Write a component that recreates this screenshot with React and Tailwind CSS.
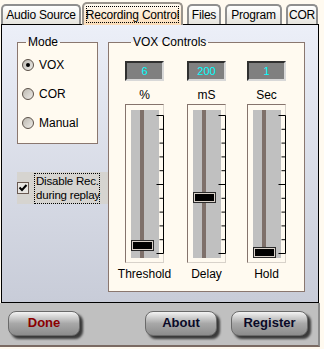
import React from "react";

const FONT = { fontFamily: '"Liberation Sans", Tahoma, Arial, sans-serif' };

function Tab({ label, selected, w }) {
  if (selected) {
    return (
      <div
        className={`relative h-[23px] ${w} -mb-[1px] rounded-t-[5px] border-2 border-b-0 border-[#9a948c] bg-gradient-to-b from-[#fffaf0] to-[#fbdcb8] px-[2px] pt-[2px] z-10`}
      >
        <div className="flex h-[17px] items-center justify-center whitespace-nowrap border border-dotted border-black text-[12px] tracking-[-0.2px] text-black">
          {label}
        </div>
      </div>
    );
  }
  return (
    <div
      className={`flex h-[20px] ${w} items-center justify-center whitespace-nowrap rounded-t-[5px] border-2 border-b-0 border-[#8f8f8f] bg-gradient-to-b from-[#ffffff] to-[#e6e4de] text-[12px] tracking-[-0.2px] text-black`}
    >
      {label}
    </div>
  );
}

function Radio({ label, checked }) {
  return (
    <div className="flex items-center gap-[5px] h-[14px]">
      <div className="flex h-[12px] w-[12px] items-center justify-center rounded-full border border-[#5a5048] bg-gradient-to-br from-[#bcb8b0] to-[#eeece8]">
        {checked && <div className="h-[4px] w-[4px] rounded-full bg-black" />}
      </div>
      <span className="text-[12px] text-black">{label}</span>
    </div>
  );
}

function ValueBox({ v }) {
  return (
    <div className="flex h-[20px] w-[39px] items-center justify-center border-2 border-t-[#303030] border-l-[#303030] border-b-[#d8d8d8] border-r-[#d8d8d8] bg-[#808080] text-[11px] text-[#00ffff]">
      {v}
    </div>
  );
}

function Slider({ pos }) {
  const ticks = [];
  for (let i = 0; i <= 10; i++) {
    const y = 5.5 + i * 13.8;
    const long = i === 0 || i === 5 || i === 10;
    ticks.push(
      <line key={i} x1={long ? 30 : 33} x2={37} y1={y} y2={y} stroke="black" strokeWidth="1" />
    );
  }
  return (
    <div className="relative h-[159px] w-[39px] border border-t-[#85736c] border-l-[#85736c] border-b-[#d8d2ca] border-r-[#d8d2ca] bg-[#fffaf0] pl-[5px] pt-[5px]">
      <div className="relative flex h-[148px] w-[28px] justify-start bg-[#c0c0c0]">
        <div className="ml-[9px] h-full w-[4px] bg-[#7e706a]" />
        <div
          className="absolute left-0 h-[11px] w-[23px] border border-[#2a2a2a] bg-black shadow-[inset_0_0_0_1px_#d8d0c8]"
          style={{ top: pos }}
        />
      </div>
      <svg className="absolute left-0 top-0" width="39" height="159">
        <line x1="37.5" x2="37.5" y1="10.5" y2="148.5" stroke="black" strokeWidth="1" />
        <g transform="translate(0.5,5)">{ticks}</g>
      </svg>
    </div>
  );
}

function GlossButton({ label, w, red }) {
  return (
    <div className={`relative h-[28px] ${w}`}>
      <div className="absolute left-[3px] top-[3px] h-[25px] w-[calc(100%-3px)] rounded-[8px] bg-[#3a3a3a] blur-[1px]" />
      <div
        className={`relative flex h-[25px] w-[calc(100%-3px)] items-center justify-center rounded-[8px] border border-[#6a6a6a] bg-gradient-to-b from-[#f4f4f4] via-[#a8a8a8] to-[#8c8c8c] text-[13px] font-bold ${
          red ? "text-[#8b0000]" : "text-[#0a0a28]"
        }`}
      >
        <span className="relative">{label}</span>
      </div>
    </div>
  );
}

export default function App() {
  return (
    <div className="h-[349px] w-[324px] overflow-hidden bg-[#fffaf0]" style={FONT}>
      {/* tabs */}
      <div className="flex h-[24px] items-end pl-[1px]">
        <Tab label="Audio Source" w="w-[80px]" />
        <div className="w-[1px]" />
        <Tab label="Recording Control" w="w-[101px]" selected />
        <div className="w-[4px]" />
        <Tab label="Files" w="w-[34px]" />
        <div className="w-[4px]" />
        <Tab label="Program" w="w-[57px]" />
        <div className="w-[4px]" />
        <Tab label="COR" w="w-[32px]" />
      </div>

      {/* panel */}
      <div className="ml-[1px] flex h-[279px] w-[318px] border border-black bg-gradient-to-b from-[#eceff8] to-[#c8ccd8] pl-[15px] pt-[11px]">
        {/* left column */}
        <div className="flex w-[91px] flex-col">
          <fieldset className="h-[108px] w-[81px] border border-[#8a776f] bg-[#fffaf0] pl-[4px] pt-[2px]">
            <legend className="ml-[4px] px-[2px] text-[12px] leading-[13px] text-black">Mode</legend>
            <div className="flex flex-col gap-[15px] pt-[7px]">
              <Radio label="VOX" checked />
              <Radio label="COR" />
              <Radio label="Manual" />
            </div>
          </fieldset>
          <div className="mt-[28px] flex h-[32px] w-[91px] items-center bg-[#d6d4d0]">
            <div className="flex h-[12px] w-[12px] items-center justify-center border border-[#6a5a52] bg-[#e8e6e2]">
              <svg width="10" height="10" viewBox="0 0 10 10">
                <path d="M1.5 4.5 L4 7 L8.5 2" fill="none" stroke="black" strokeWidth="2" />
              </svg>
            </div>
            <div className="ml-[5px] flex h-[31px] w-[66px] flex-col justify-center whitespace-nowrap border border-dotted border-black pl-[1px] text-[11.5px] leading-[14px] tracking-[-0.2px] text-black">
              <span>Disable Rec.</span>
              <span>during replay</span>
            </div>
          </div>
        </div>

        {/* VOX controls */}
        <fieldset className="h-[256px] w-[197px] border border-[#8a776f] bg-[#fffaf0] pl-[16px] pt-[12px]">
          <legend className="ml-[6px] px-[2px] text-[12px] leading-[13px] text-black">VOX Controls</legend>
          <div className="flex gap-[23px]">
            {[
              ["6", "%", 130, "Threshold"],
              ["200", "mS", 82, "Delay"],
              ["1", "Sec", 137, "Hold"],
            ].map(([v, u, pos, name], i) => (
              <div key={i} className={`flex w-[39px] flex-col items-center ${i === 2 ? "-ml-[2px]" : ""}`}>
                <ValueBox v={v} />
                <div className="mt-[6px] h-[16px] text-[12px] leading-[16px] text-black">{u}</div>
                <div className="mt-[1px]">
                  <Slider pos={pos} />
                </div>
                <div className="mt-[4px] text-[12px] leading-[14px] text-black">{name}</div>
              </div>
            ))}
          </div>
        </fieldset>
      </div>

      {/* bottom bar */}
      <div className="flex h-[44px] w-[320px] items-center border-b-2 border-r-2 border-b-[#7a6a62] border-r-[#8a8a8a] bg-[#c0c0c0] pl-[8px] pt-[1px]">
        <GlossButton label="Done" w="w-[75px]" red />
        <div className="w-[62px]" />
        <GlossButton label="About" w="w-[75px]" />
        <div className="w-[11px]" />
        <GlossButton label="Register" w="w-[80px]" />
      </div>
    </div>
  );
}
